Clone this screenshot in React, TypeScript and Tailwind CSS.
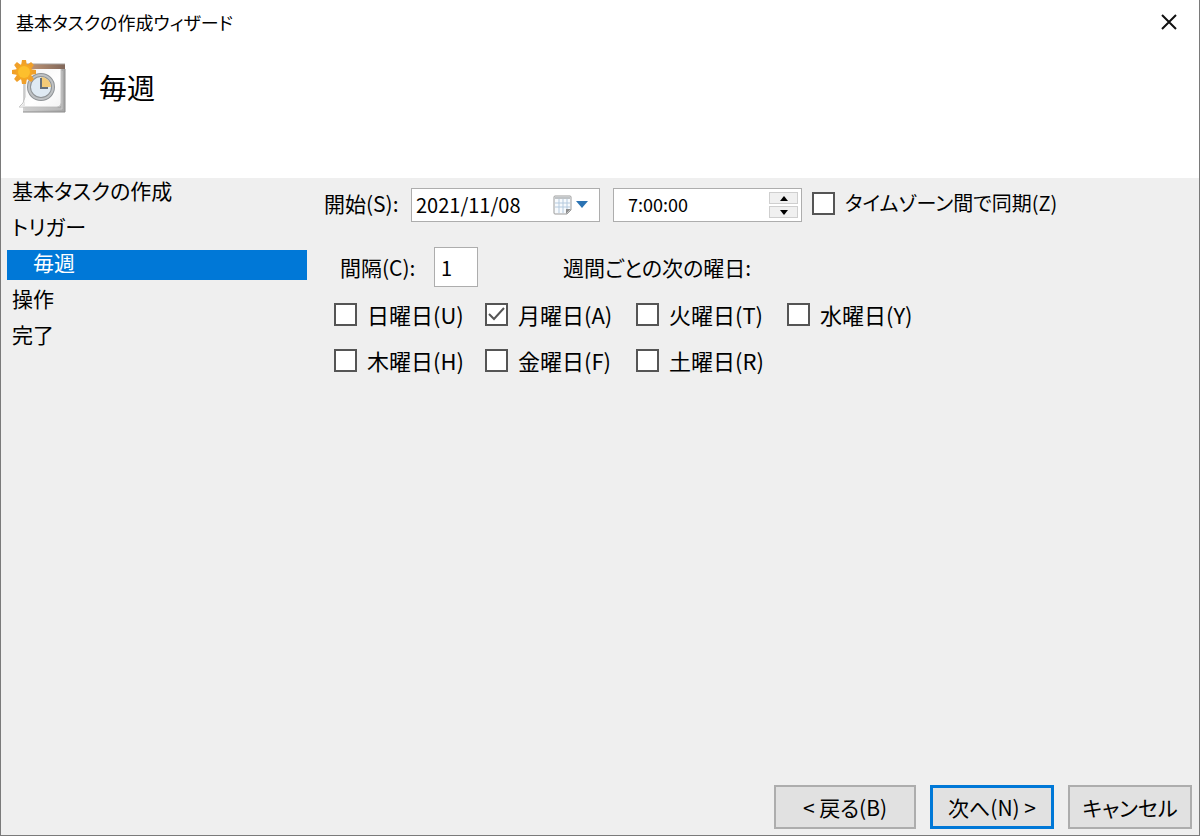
import { useState } from "react";

const steps = [
  { name: "基本タスクの作成" },
  { name: "トリガー" },
  { name: "毎週", child: true },
  { name: "操作" },
  { name: "完了" },
];

const days = [
  { id: "sun", label: "日曜日(U)" },
  { id: "mon", label: "月曜日(A)" },
  { id: "tue", label: "火曜日(T)" },
  { id: "wed", label: "水曜日(Y)" },
  { id: "thu", label: "木曜日(H)" },
  { id: "fri", label: "金曜日(F)" },
  { id: "sat", label: "土曜日(R)" },
];

const rays = [0, 45, 90, 135, 180, 225, 270, 315];

function TaskIcon() {
  return (
    <svg width="56" height="56" viewBox="0 0 56 56" aria-hidden="true">
      <defs>
        <linearGradient id="page" x1="0" y1="0" x2="1" y2="1">
          <stop offset="0" stopColor="#f0f0f0" />
          <stop offset="0.6" stopColor="#ffffff" />
          <stop offset="1" stopColor="#f3f3f3" />
        </linearGradient>
        <linearGradient id="band" x1="0" y1="0" x2="1" y2="0">
          <stop offset="0" stopColor="#c79a78" />
          <stop offset="1" stopColor="#80675a" />
        </linearGradient>
        <linearGradient id="edge" x1="0" y1="0" x2="1" y2="0">
          <stop offset="0" stopColor="#d2d2d2" />
          <stop offset="1" stopColor="#a6a6a6" />
        </linearGradient>
      </defs>
      <path d="M12 5h42v48H12z" fill="url(#edge)" />
      <path d="M12 53h42V10" fill="none" stroke="#8c8c8c" />
      <path d="M14 50h37V12" fill="none" stroke="#c8c8c8" />
      <path d="M14 9h36v35q0 4-4 4H8q5-3 6-10z" fill="url(#page)" stroke="#c4c4c4" />
      <path d="M8 48q5-2 6-7v7z" fill="#e6e6e6" />
      <path d="M14 5h40v5H14z" fill="url(#band)" />
      <path d="M14 5h40" stroke="#a5a09c" />
      <circle cx="30" cy="28" r="12" fill="#dfeaf3" stroke="#8f9396" strokeWidth="4" />
      <circle cx="30" cy="28" r="12" fill="none" stroke="#bfc2c4" strokeWidth="2" />
      <path d="M30 28V18a10 10 0 0 1 10 10z" fill="#f3cb78" />
      <path d="M30 19v10h7" fill="none" stroke="#65707a" strokeWidth="2" />
      <g transform="translate(13 13)">
        {rays.map((angle) => (
          <path key={angle} d="M-3-6L-2-12H2L3-6z" fill="#f0a02a" transform={`rotate(${angle})`} />
        ))}
        <circle r="8" fill="#f5a623" />
        <circle r="6" fill="#fdbf2d" />
      </g>
    </svg>
  );
}

function CalendarIcon() {
  return (
    <svg width="20" height="20" viewBox="0 0 20 20" aria-hidden="true">
      <path d="M2 1h15q1 0 1 1v13l-4 4H2q-1 0-1-1V2q0-1 1-1z" fill="#f7fafd" stroke="#9b9b9b" />
      <path d="M2 2h15v2H2z" fill="#bfc3c6" />
      <path d="M2 8h15M2 12h15M6 4v14M10 4v14M14 4v10" stroke="#b5cade" />
      <path d="M13 19v-5h5z" fill="#8d8d8d" />
    </svg>
  );
}

function CheckBox({
  id,
  label,
  checked,
  onChange,
}: {
  id: string;
  label: string;
  checked: boolean;
  onChange: () => void;
}) {
  return (
    <div className="flex items-center gap-2.5">
      <span className="grid shrink-0">
        <input
          id={id}
          type="checkbox"
          checked={checked}
          onChange={onChange}
          className="col-start-1 row-start-1 size-[23px] appearance-none border-2 border-[#555555] bg-white"
        />
        {checked && (
          <svg viewBox="0 0 23 23" className="pointer-events-none col-start-1 row-start-1 size-[23px]" aria-hidden="true">
            <path d="M4 11l5 5 10-11" fill="none" stroke="#555555" strokeWidth="2" />
          </svg>
        )}
      </span>
      <label htmlFor={id} className="whitespace-nowrap">
        {label}
      </label>
    </div>
  );
}

export default function App() {
  const [selected, setSelected] = useState<string[]>(["mon"]);
  const [sync, setSync] = useState(false);
  const [date, setDate] = useState("2021/11/08");
  const [time, setTime] = useState("7:00:00");
  const [interval, setInterval] = useState("1");

  const toggleDay = (id: string) => {
    setSelected((prev) => (prev.includes(id) ? prev.filter((d) => d !== id) : [...prev, id]));
  };

  return (
    <div className="flex min-h-screen flex-col border-x border-b border-[#7a7a7a] bg-[#efefef] font-['Noto_Sans_CJK_JP',sans-serif] text-[21px] leading-[30px] text-black [font-feature-settings:'palt']">
      <header className="h-[178px] bg-white">
        <div className="flex h-11 items-center justify-between pr-[21px] pl-[15px]">
          <h1 className="text-lg">基本タスクの作成ウィザード</h1>
          <button type="button" aria-label="閉じる">
            <svg width="18" height="18" viewBox="0 0 18 18" aria-hidden="true">
              <path d="M2 2l14 14M16 2L2 16" stroke="#111111" strokeWidth="2" />
            </svg>
          </button>
        </div>
        <div className="flex items-center gap-8 pt-[15px] pl-2.5">
          <TaskIcon />
          <h2 className="text-[28px] leading-10">毎週</h2>
        </div>
      </header>

      <div className="flex flex-1">
        <nav className="w-[306px] shrink-0 pl-[6px]">
          <ol className="flex flex-col gap-1.5">
            {steps.map((step) => (
              <li key={step.name} className={step.child ? "bg-[#0078d7] pl-[26px] text-white" : "pl-[5px]"}>
                <span className="block h-[30px] leading-6">{step.name}</span>
              </li>
            ))}
          </ol>
        </nav>

        <main className="flex-1 pt-2.5 pl-[17px]">
          <div className="flex items-center leading-[26px]">
            <label htmlFor="start-date" className="w-[87px] pb-1">
              開始(S):
            </label>
            <div className="flex h-[34px] w-[189px] items-center border border-[#adadad] bg-white pr-2.5 pl-1">
              <input
                id="start-date"
                value={date}
                onChange={(e) => setDate(e.target.value)}
                className="min-w-0 flex-1 bg-transparent text-xl leading-[26px] outline-none"
              />
              <button type="button" aria-label="カレンダー" className="flex items-center gap-0.5">
                <CalendarIcon />
                <svg width="14" height="8" viewBox="0 0 14 8" aria-hidden="true">
                  <path d="M1 0h12L7 7z" fill="#2b73b3" />
                </svg>
              </button>
            </div>
            <div className="ml-[13px] flex h-[34px] w-[189px] items-center border border-[#adadad] bg-white pr-[3px] pl-3.5">
              <input
                aria-label="開始時刻"
                value={time}
                onChange={(e) => setTime(e.target.value)}
                className="min-w-0 flex-1 bg-transparent pb-0.5 text-lg leading-[26px] outline-none"
              />
              <div className="flex flex-col gap-0.5">
                <button type="button" aria-label="上へ" className="flex h-3 w-[29px] items-center justify-center border border-[#cfcfcf] bg-[#f0f0f0]">
                  <svg width="8" height="5" viewBox="0 0 8 5" aria-hidden="true">
                    <path d="M0 5h8L4 0z" />
                  </svg>
                </button>
                <button type="button" aria-label="下へ" className="flex h-3 w-[29px] items-center justify-center border border-[#cfcfcf] bg-[#f0f0f0]">
                  <svg width="8" height="5" viewBox="0 0 8 5" aria-hidden="true">
                    <path d="M0 0h8L4 5z" />
                  </svg>
                </button>
              </div>
            </div>
            <div className="ml-2.5 pb-1 text-xl leading-[26px]">
              <CheckBox id="sync" label="タイムゾーン間で同期(Z)" checked={sync} onChange={() => setSync(!sync)} />
            </div>
          </div>

          <div className="mt-[25px] flex items-center pl-4">
            <label htmlFor="interval" className="w-[94px]">
              間隔(C):
            </label>
            <input
              id="interval"
              value={interval}
              onChange={(e) => setInterval(e.target.value)}
              className="h-10 w-11 border border-[#adadad] bg-white px-1.5 text-xl outline-none"
            />
            <span className="ml-[85px]">週間ごとの次の曜日:</span>
          </div>

          <div className="mt-3 grid grid-cols-[repeat(4,151px)] gap-y-4 pl-2.5 text-[22px]">
            {days.map((day) => (
              <CheckBox
                key={day.id}
                id={day.id}
                label={day.label}
                checked={selected.includes(day.id)}
                onChange={() => toggleDay(day.id)}
              />
            ))}
          </div>
        </main>
      </div>

      <footer className="flex justify-end gap-3.5 pr-[7px] pb-[6px]">
        <button type="button" className="h-11 w-[142px] border-2 border-[#adadad] bg-[#e1e1e1]">
          &lt; 戻る(B)
        </button>
        <button type="button" className="h-11 w-[124px] border-3 border-[#0078d7] bg-[#e1e1e1]">
          次へ(N) &gt;
        </button>
        <button type="button" className="h-11 w-[124px] border-2 border-[#adadad] bg-[#e1e1e1]">
          キャンセル
        </button>
      </footer>
    </div>
  );
}
